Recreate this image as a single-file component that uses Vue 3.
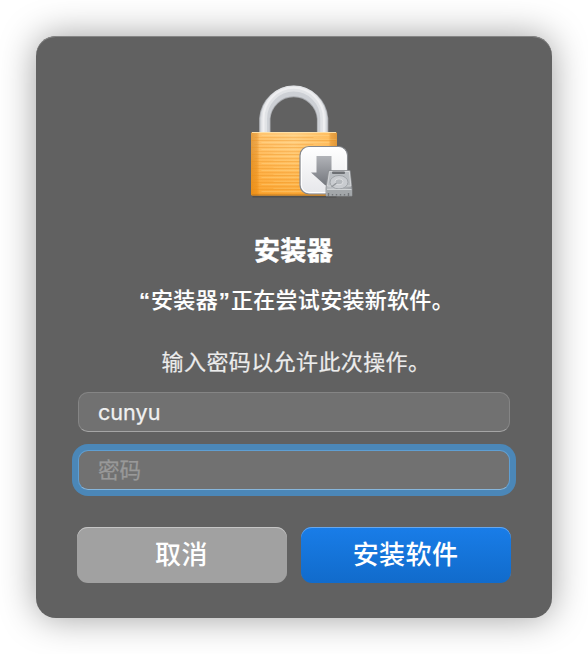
<script setup>
import { ref } from 'vue'

const username = ref('cunyu')
const password = ref('')
</script>

<template>
  <main class="stage">
    <form class="dialog" @submit.prevent>
      <svg class="lock" width="106" height="118" viewBox="-0.5 0 106 118" aria-hidden="true">
        <defs>
          <linearGradient id="body" x1="0" x2="1" y1="0" y2="0">
            <stop offset="0" stop-color="#e0922b" />
            <stop offset=".07" stop-color="#eda03a" />
            <stop offset=".1" stop-color="#ffbd5e" />
            <stop offset=".5" stop-color="#ffc872" />
            <stop offset=".9" stop-color="#ffb851" />
            <stop offset=".93" stop-color="#eb9c32" />
            <stop offset="1" stop-color="#dc8d26" />
          </linearGradient>
          <linearGradient id="bodyShade" x1="0" x2="0" y1="0" y2="1">
            <stop offset="0" stop-color="#fff" stop-opacity=".1" />
            <stop offset=".5" stop-color="#ff9a1a" stop-opacity=".2" />
            <stop offset="1" stop-color="#f58a00" stop-opacity=".5" />
          </linearGradient>
          <linearGradient id="tile" x1="0" x2="0" y1="0" y2="1">
            <stop offset="0" stop-color="#fff" />
            <stop offset="1" stop-color="#e6e7ea" />
          </linearGradient>
          <linearGradient id="arrow" x1="0" x2="0" y1="0" y2="1">
            <stop offset="0" stop-color="#b1b3b8" />
            <stop offset="1" stop-color="#74777d" />
          </linearGradient>
          <linearGradient id="drive" x1="0" x2="1" y1="0" y2="1">
            <stop offset="0" stop-color="#969a9e" />
            <stop offset=".5" stop-color="#c3c6ca" />
            <stop offset="1" stop-color="#8b8f93" />
          </linearGradient>
          <pattern id="brush" width="90" height="7" patternUnits="userSpaceOnUse">
            <path d="M0 .5H90" stroke="#e98c16" stroke-opacity=".32" />
            <path d="M12 2.5H80" stroke="#fff0b5" stroke-opacity=".22" />
            <path d="M5 4.5H64" stroke="#e98c16" stroke-opacity=".26" />
            <path d="M24 6.5H90" stroke="#ffe6a0" stroke-opacity=".16" />
          </pattern>
        </defs>

        <g fill="none">
          <path d="M15.3 52V34.5a29 29.5 0 0 1 57.8 0v17.5" stroke="#a7a9ad" stroke-width="11.4" />
          <path d="M15.3 52V34.5a29 29.5 0 0 1 57.8 0v17.5" stroke="#cdd0d5" stroke-width="9.8" />
          <path d="M14.6 52V34.5a29.6 30 0 0 1 59.2 0v17.5" stroke="#e1e3e6" stroke-width="6" />
          <path d="M14 52V34.5a30 30.5 0 0 1 60.4 0v17.5" stroke="#efeff1" stroke-width="2" />
        </g>

        <path d="M3 112h84v1.5H3z" fill="#454545" opacity=".65" />
        <rect x="1.5" y="48" width="86" height="63.6" rx="1.5" fill="url(#body)" />
        <rect x="1.5" y="48" width="86" height="63.6" rx="1.5" fill="url(#bodyShade)" />
        <rect x="2" y="50" width="85" height="61" fill="url(#brush)" />
        <path d="M2.5 48.5h84" stroke="#ffe0a6" />
        <path d="M2.5 111h84" stroke="#bf791e" />

        <rect x="50.5" y="62.5" width="47.5" height="47.5" rx="9" fill="url(#tile)" stroke="#85888d" stroke-width="1.2" />
        <rect x="52" y="64" width="44.5" height="44.5" rx="7.5" fill="none" stroke="#fff" />
        <path d="M67 72h15v16.5h6.7L76 101.5 61.5 88.5H67z" fill="url(#arrow)" />

        <path d="M79 86.5h21.5l2 18.5v7H76.5v-8z" fill="url(#drive)" stroke="#8a8d91" stroke-width=".8" />
        <path d="M80 87.5h19.8l1.6 14.5H78z" fill="#b9bdc1" stroke="#dfe1e3" stroke-width=".7" />
        <rect x="82.5" y="87.5" width="13" height="2.4" rx="1" fill="#6c6f73" />
        <ellipse cx="89.5" cy="98.2" rx="9" ry="6.7" fill="#c9ccd0" stroke="#a0a4a8" />
        <ellipse cx="89.5" cy="97.8" rx="4" ry="3" fill="#b6babe" stroke="#dcdee0" />
        <path d="M82 103l5-4" stroke="#92969a" stroke-width="1.2" />
        <path d="M77 105.5h25.5v6.2H77z" fill="#a3a7aa" />
        <path d="M77.5 105.5h24.5" stroke="#d0d3d5" />
        <path d="M79 109v3m4-2v1.5m4-1.5v1.5m4-1.5v1.5m4-1.5v1.5m4-2.5v3" stroke="#74777a" stroke-width="1.4" />
      </svg>

      <h1>安装器</h1>
      <p class="message"><span class="quote">“</span>安装器<span class="quote">”</span>正在尝试安装新软件。</p>
      <p class="hint">输入密码以允许此次操作。</p>

      <div class="fields">
        <input v-model="username" class="field" type="text" spellcheck="false" />
        <input v-model="password" class="field active" type="password" placeholder="密码" />
      </div>

      <div class="actions">
        <button class="button cancel" type="button">取消</button>
        <button class="button install" type="submit">安装软件</button>
      </div>
    </form>
  </main>
</template>

<style>
body {
  background: #fff;
  overflow: hidden;
}
</style>

<style scoped>
.stage {
  box-sizing: border-box;
  height: 654px;
  padding: 36px;
}

.dialog {
  box-sizing: border-box;
  display: flex;
  flex-direction: column;
  align-items: center;
  width: 516px;
  height: 582px;
  padding: 48px 41px 35px;
  border-radius: 20px;
  background: #616161;
  box-shadow: inset 0 1px #858585, 0 0 36px rgba(0, 0, 0, 0.38);
  color: #fff;
  font-family: Inter, "Noto Sans CJK SC", sans-serif;
}

.lock {
  flex: none;
  margin-left: 16px;
}

h1 {
  margin: 29px 1px 0 0;
  font-size: 26px;
  font-weight: 700;
  letter-spacing: 0.3px;
  line-height: 40px;
  -webkit-text-stroke: 0.5px;
}

.message {
  margin: 13px 0 0 4px;
  font-size: 22px;
  font-weight: 500;
  letter-spacing: 0.3px;
  line-height: 32px;
  white-space: nowrap;
  -webkit-text-stroke: 0.1px;
}

.quote {
  display: inline-block;
  width: 13px;
  font-family: "Liberation Sans", sans-serif;
  font-weight: 700;
  line-height: 1;
  text-align: center;
}

.hint {
  margin: 30px 0 0 4px;
  color: #ececec;
  font-size: 22px;
  letter-spacing: 0.4px;
  line-height: 32px;
  -webkit-text-stroke: 0.2px;
}

.fields {
  display: grid;
  gap: 18px;
  width: 432px;
  margin-top: 14px;
}

.field {
  box-sizing: border-box;
  width: 100%;
  height: 40px;
  margin: 0;
  padding: 0 19px;
  border: 1px solid #858585;
  border-bottom-color: #a5a5a5;
  border-radius: 10px;
  outline: none;
  background: #717171;
  color: #f0f0f0;
  font: 400 21.6px/38px Inter, "Noto Sans CJK SC", sans-serif;
  -webkit-text-stroke: 0.25px;
}

.field::placeholder {
  color: #999;
  opacity: 1;
}

.active {
  border-color: #5f9fd3;
  border-bottom-color: #86b6dc;
  box-shadow: 0 0 0 6px #4b87b8;
}

.actions {
  display: flex;
  gap: 14px;
  margin-top: 37px;
}

.button {
  width: 210px;
  height: 56px;
  padding: 0 1px 0 0;
  border: 0;
  border-radius: 11px;
  color: #fff;
  font: 500 26px/56px Inter, "Noto Sans CJK SC", sans-serif;
  letter-spacing: 0.4px;
}

.cancel {
  background: #a1a1a1;
  box-shadow: inset 0 1px #c5c5c5;
}

.install {
  background: linear-gradient(#197de8, #116bcb);
  box-shadow: inset 0 1px #67a7ed;
}
</style>
